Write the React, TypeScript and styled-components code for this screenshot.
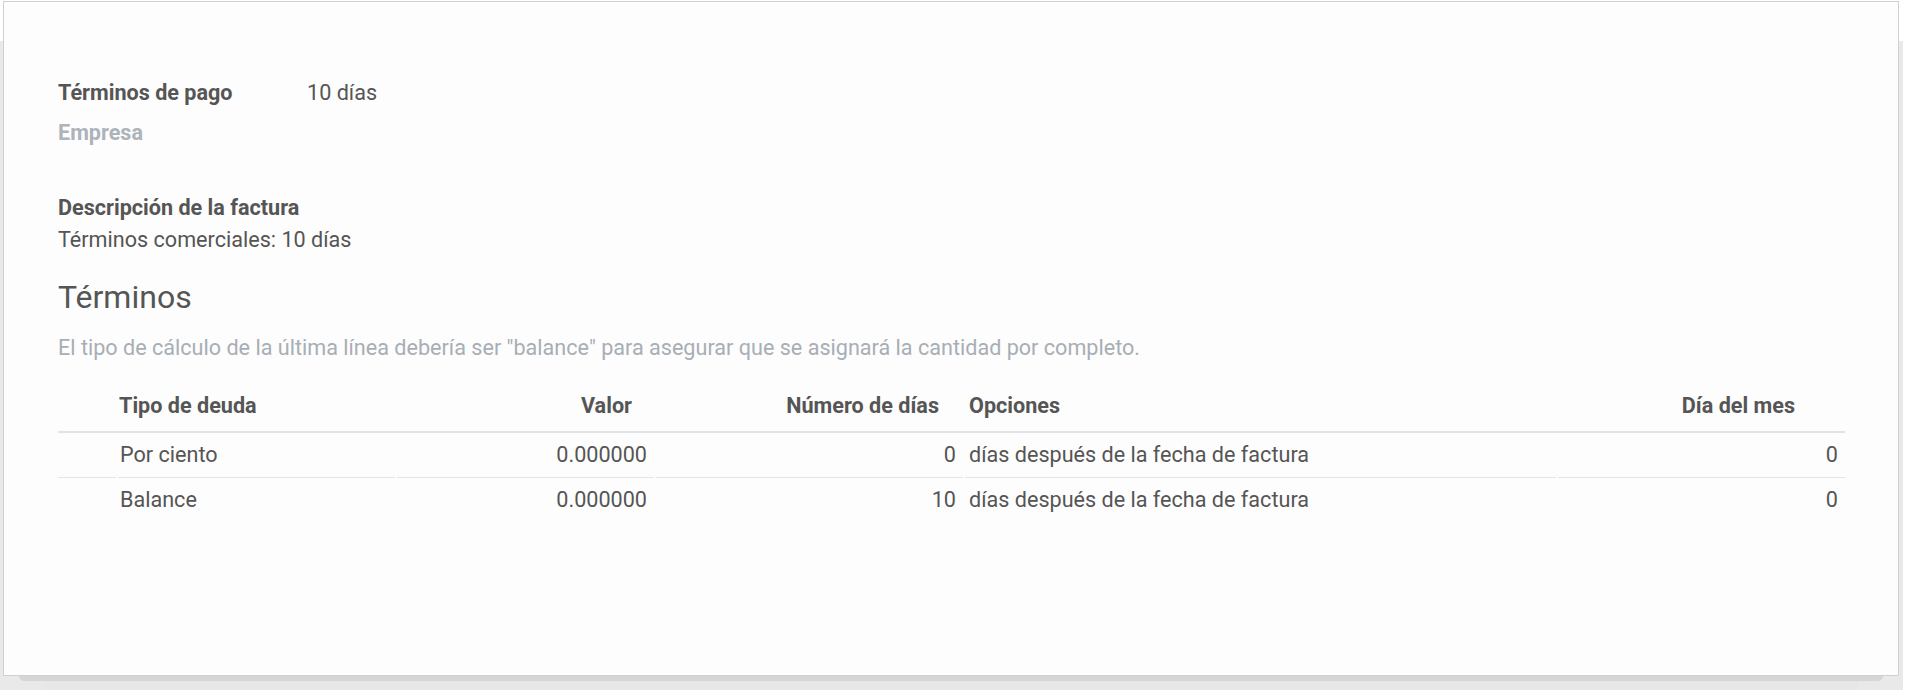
import { FC } from 'react';
import styled, { createGlobalStyle } from 'styled-components';

const GlobalStyle = createGlobalStyle`
  html, body {
    margin: 0;
    padding: 0;
    background: #ffffff;
  }
  body {
    font-family: Roboto, 'Liberation Sans', sans-serif;
    font-size: 21.6px;
    line-height: 29px;
    color: #555555;
  }
`;

const Page = styled.div`
  width: 1896px;
  margin: 1px 0 0 3px;
`;

const Sheet = styled.div`
  box-sizing: border-box;
  height: 675px;
  padding: 76px 53px 0 54px;
  background: #fdfdfd;
  border: 1px solid #cfd0d2;
  box-shadow: 4px 40px 0 0 #e9e9e9, -3px 40px 0 0 #e9e9e9;
`;

/* the paper sheets stacked under the form */
const SheetEdge = styled.div<{ inset: number; h: number; color: string }>`
  height: ${(p) => p.h}px;
  margin: 0 ${(p) => p.inset}px;
  background: ${(p) => p.color};
  border-radius: 0 0 6px 6px;
`;

const FieldGrid = styled.div`
  display: grid;
  grid-template-columns: 249px auto;
  row-gap: 11px;
`;

const Label = styled.div<{ muted?: boolean }>`
  font-weight: 700;
  color: ${(p) => (p.muted ? '#adb3ba' : '#555555')};
`;

const Value = styled.div`
  color: #555555;
`;

const Block = styled.div`
  margin-top: 46px;
`;

const BlockLabel = styled.div`
  font-weight: 700;
  margin-bottom: 3px;
`;

const Heading = styled.h2`
  margin: 24px 0 0;
  font-size: 32px;
  line-height: 38px;
  font-weight: 400;
  color: #555555;
`;

const Help = styled.p`
  margin: 17px 0 0;
  color: #a8aeb5;
`;

const COLS = '58px 277px 257px 307px 591px 1fr';

const HeadRow = styled.div`
  display: grid;
  grid-template-columns: ${COLS};
  column-gap: 2px;
  margin-top: 18px;
  border-bottom: 2px solid #e2e3e5;
`;

const HeadCell = styled.div<{ align?: 'left' | 'right'; pr?: number; pl?: number }>`
  padding: 11px ${(p) => p.pr ?? 0}px 11px ${(p) => p.pl ?? (p.align === 'right' ? 0 : 1)}px;
  text-align: ${(p) => p.align ?? 'left'};
  font-weight: 700;
  white-space: nowrap;
`;

const BodyRow = styled.div`
  display: grid;
  grid-template-columns: ${COLS};
  column-gap: 2px;
`;

const Cell = styled.div<{ align?: 'left' | 'right'; last?: boolean; pl?: number }>`
  padding: 7px ${(p) => (p.align === 'right' ? 7 : 0)}px 8px ${(p) => p.pl ?? (p.align === 'right' ? 0 : 2)}px;
  text-align: ${(p) => p.align ?? 'left'};
  border-bottom: 1px solid ${(p) => (p.last ? 'transparent' : '#e3e4e6')};
  white-space: nowrap;
`;

interface Line {
  kind: string;
  value: string;
  days: number;
  option: string;
  dayOfMonth: number;
}

const lines: Line[] = [
  { kind: 'Por ciento', value: '0.000000', days: 0, option: 'días después de la fecha de factura', dayOfMonth: 0 },
  { kind: 'Balance', value: '0.000000', days: 10, option: 'días después de la fecha de factura', dayOfMonth: 0 },
];

const App: FC = () => {
  return (
    <>
      <GlobalStyle />
      <Page>
        <Sheet>
          <FieldGrid>
            <Label>Términos de pago</Label>
            <Value>10 días</Value>
            <Label muted>Empresa</Label>
            <Value />
          </FieldGrid>

          <Block>
            <BlockLabel>Descripción de la factura</BlockLabel>
            <Value>Términos comerciales: 10 días</Value>
          </Block>

          <Heading>Términos</Heading>
          <Help>
            El tipo de cálculo de la última línea debería ser "balance" para asegurar que se asignará la cantidad por completo.
          </Help>

          <HeadRow>
            <HeadCell />
            <HeadCell>Tipo de deuda</HeadCell>
            <HeadCell align="right" pr={22}>Valor</HeadCell>
            <HeadCell align="right" pr={24}>Número de días</HeadCell>
            <HeadCell pl={4}>Opciones</HeadCell>
            <HeadCell align="right" pr={50}>Día del mes</HeadCell>
          </HeadRow>
          {lines.map((l, i) => {
            const last = i === lines.length - 1;
            return (
              <BodyRow key={l.kind}>
                <Cell last={last} />
                <Cell last={last}>{l.kind}</Cell>
                <Cell last={last} align="right">{l.value}</Cell>
                <Cell last={last} align="right">{l.days}</Cell>
                <Cell last={last} pl={4}>{l.option}</Cell>
                <Cell last={last} align="right">{l.dayOfMonth}</Cell>
              </BodyRow>
            );
          })}
        </Sheet>
        <SheetEdge inset={16} h={5} color="#d4d5d7" />
        <SheetEdge inset={40} h={9} color="#e7e7e7" />
      </Page>
    </>
  );
};

export default App;
